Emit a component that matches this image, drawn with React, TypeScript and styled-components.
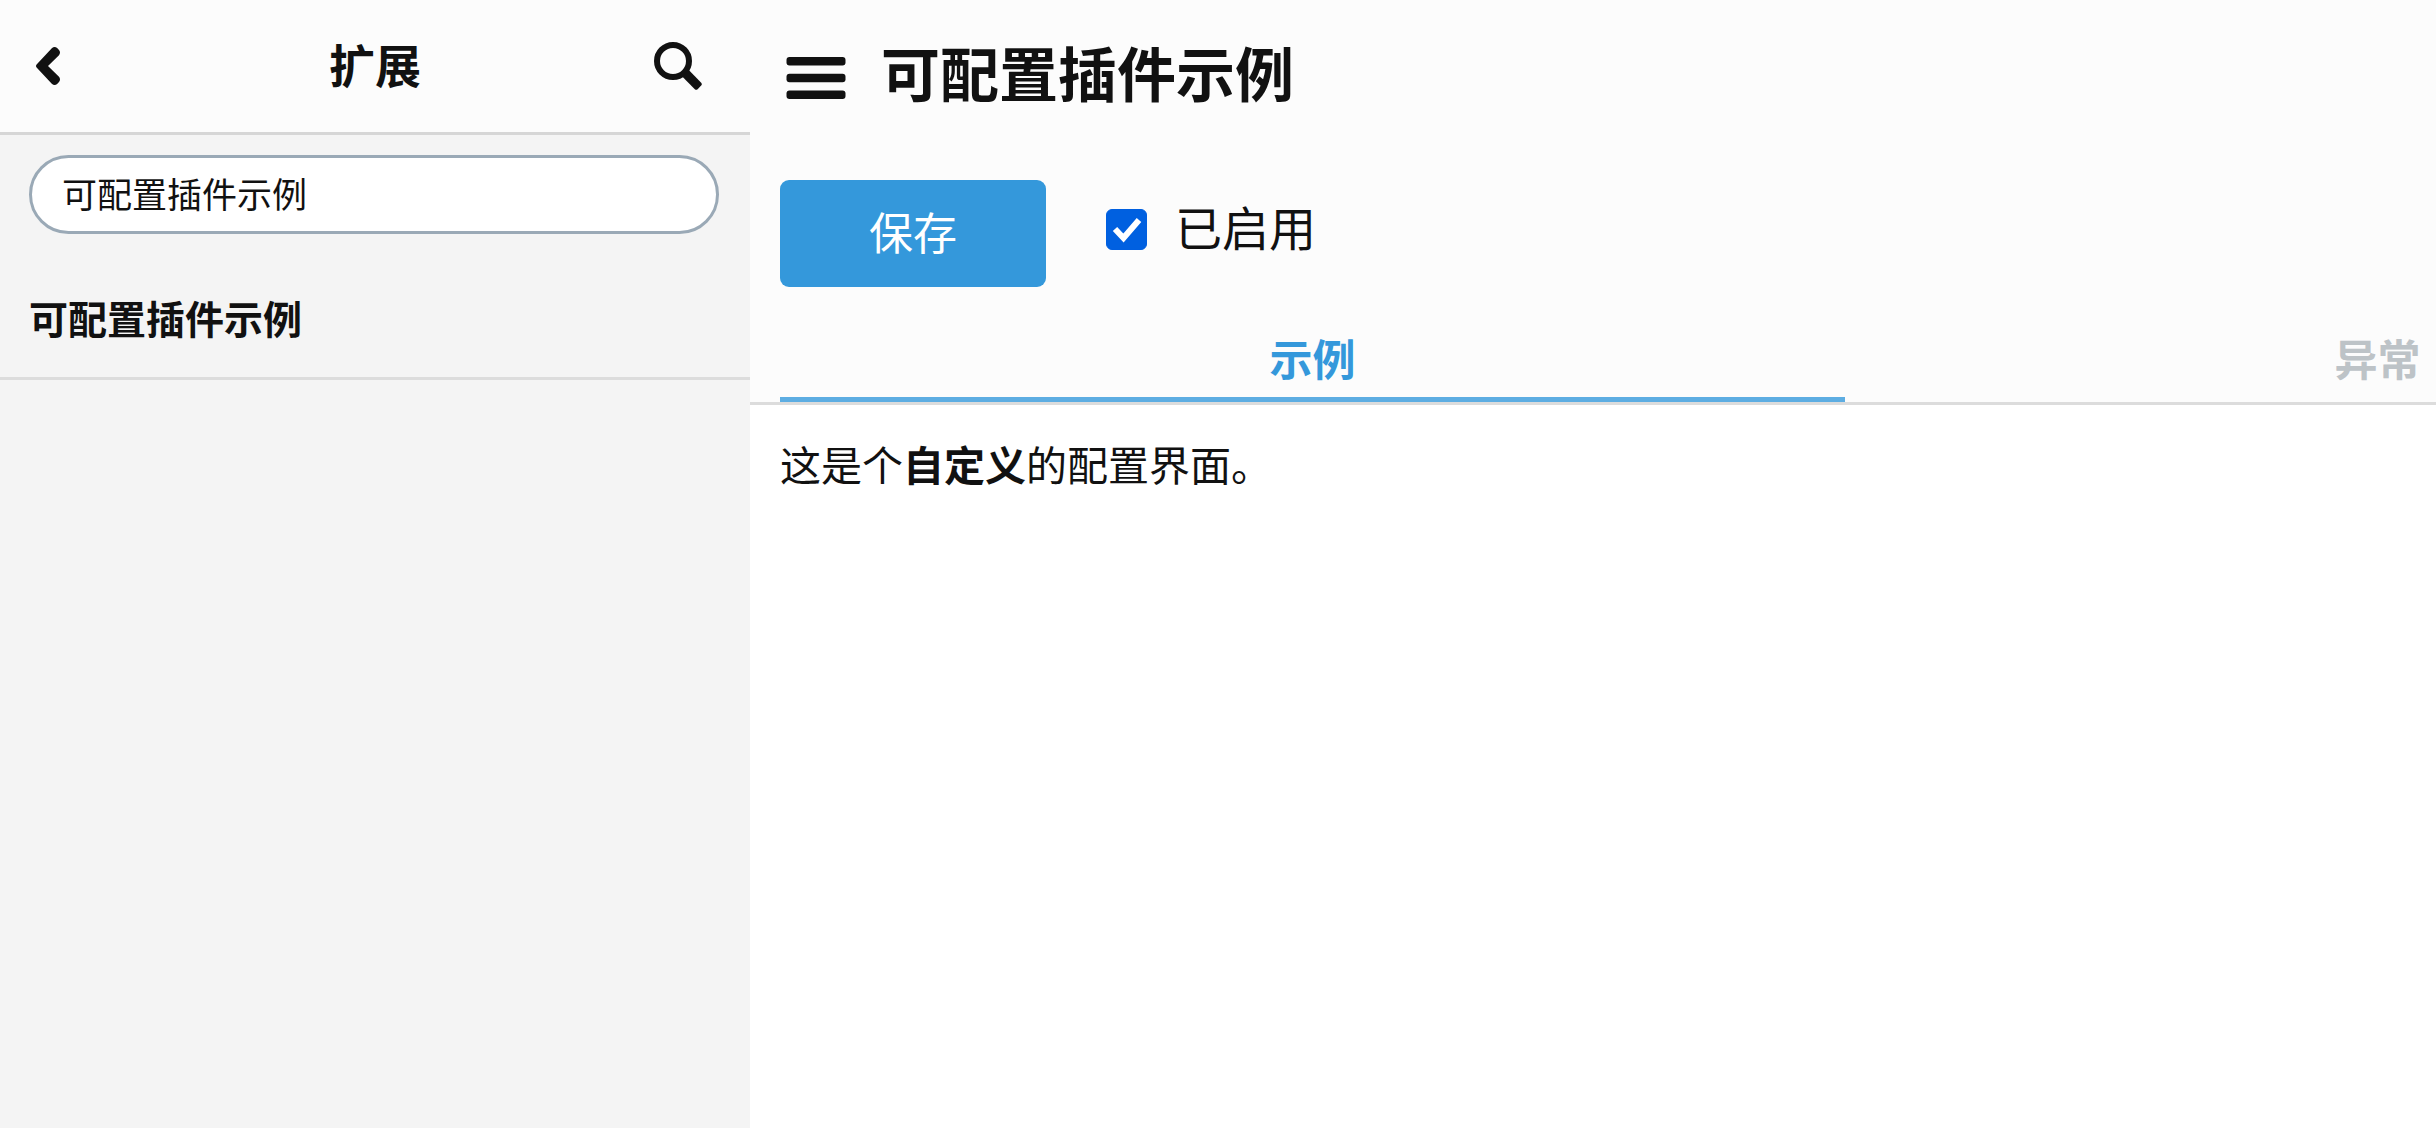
import React, { useState } from "react";
import styled, { createGlobalStyle } from "styled-components";

const GlobalStyle = createGlobalStyle`
  *, *::before, *::after { box-sizing: border-box; }
  body {
    margin: 0;
    background: #fff;
    color: #111;
    font-family: "Noto Sans CJK SC", sans-serif;
  }
  button, input { font: inherit; color: inherit; }
`;

const Page = styled.div`
  display: flex;
  min-height: 100vh;
`;

const Sidebar = styled.aside`
  flex: 0 0 750px;
  background: #f4f4f4;
`;

const SidebarHeader = styled.header`
  display: grid;
  grid-template-columns: 1fr auto 1fr;
  align-items: center;
  height: 135px;
  padding: 0 32px;
  background: #fcfcfc;
  border-bottom: 3px solid #d6d6d6;

  > :last-child { justify-self: end; }
`;

const SidebarTitle = styled.h2`
  margin: 0;
  padding-bottom: 6px;
  font-size: 46px;
  line-height: 66px;
  font-weight: 700;
`;

const IconButton = styled.button<{ $width: number }>`
  display: flex;
  align-items: center;
  justify-content: center;
  width: ${(p) => p.$width}px;
  height: 64px;
  padding: 0;
  border: 0;
  background: none;
  cursor: pointer;

  svg { display: block; fill: #111; }
`;

const SearchForm = styled.form`
  padding: 20px 31px 20px 29px;
`;

const SearchInput = styled.input`
  display: block;
  width: 100%;
  height: 79px;
  padding: 0 30px 4px;
  border: 3px solid #9aa9b6;
  border-radius: 40px;
  background: #fff;
  font-size: 35px;
  outline: none;
`;

const List = styled.ul`
  margin: 0;
  padding: 0;
  list-style: none;
`;

const ListLink = styled.a`
  display: block;
  padding: 36px 29px 33px;
  border-bottom: 3px solid #dcdcdc;
  color: inherit;
  text-decoration: none;
  font-size: 39px;
  line-height: 54px;
  font-weight: 700;
`;

const Main = styled.main`
  flex: 1;
  min-width: 0;
`;

const Top = styled.header`
  background: #fcfcfc;
  border-bottom: 3px solid #dcdcdc;
`;

const TitleRow = styled.div`
  display: flex;
  align-items: center;
  gap: 29px;
  padding: 32px 30px 0;
`;

const Title = styled.h1`
  margin: 0;
  padding-bottom: 12px;
  font-size: 59px;
  line-height: 80px;
  font-weight: 700;
`;

const Actions = styled.div`
  display: flex;
  align-items: center;
  gap: 60px;
  padding: 56px 30px 21px;
`;

const SaveButton = styled.button`
  width: 266px;
  height: 107px;
  padding: 0 0 6px;
  border: 0;
  border-radius: 9px;
  background: #3498db;
  color: #fff;
  font-size: 44px;
  cursor: pointer;
`;

const EnabledLabel = styled.label`
  display: flex;
  align-items: center;
  gap: 28px;
  padding-bottom: 8px;
  font-size: 47px;
  line-height: 64px;
`;

const LabelText = styled.span`
  padding-bottom: 8px;
`;

const Checkbox = styled.input`
  appearance: none;
  width: 41px;
  height: 41px;
  margin: 0;
  border: 1px solid #005fe0;
  border-radius: 6px;
  background: #fff;

  &:checked { background: #0060e0; }
`;

const CheckField = styled.span`
  position: relative;
  display: flex;
`;

const CheckMark = styled.svg`
  position: absolute;
  inset: 0;
  pointer-events: none;
`;

const Tabs = styled.nav`
  display: flex;
  overflow: hidden;
  padding: 0 30px;
`;

const Tab = styled.button<{ $active: boolean }>`
  flex: 0 0 65.5%;
  height: 94px;
  padding: 8px 0 0;
  border: 0;
  border-bottom: 5px solid ${(p) => (p.$active ? "#5dade2" : "transparent")};
  background: none;
  color: ${(p) => (p.$active ? "#3498db" : "#bdc3c7")};
  font-size: 43px;
  line-height: 60px;
  font-weight: 700;
  cursor: pointer;
`;

const Body = styled.p`
  margin: 0;
  padding: 28px 30px;
  font-size: 41px;
  line-height: 60px;
`;

const tabs = ["示例", "异常"];

export default function App() {
  const [query, setQuery] = useState("可配置插件示例");
  const [enabled, setEnabled] = useState(true);
  const [active, setActive] = useState(0);

  return (
    <Page lang="zh-CN">
      <GlobalStyle />
      <Sidebar>
        <SidebarHeader>
          <IconButton type="button" aria-label="返回" $width={32}>
            <svg width="24" height="38" viewBox="0 0 24 38">
              <path d="M0.600 17.400 15.800 1.200q2.800-2.400 5.600 0l1.600 1.800q2 2.600 0 5.200L12 19l11 10.800q2 2.600 0 5.200l-1.600 1.800q-2.800 2.400-5.600 0L0.600 20.600q-1.200-1.600 0-3.200z" />
            </svg>
          </IconButton>
          <SidebarTitle>扩展</SidebarTitle>
          <IconButton type="button" aria-label="搜索" $width={80}>
            <svg width="48" height="48" viewBox="0 0 48 48">
              <circle cx="19" cy="19" r="16" fill="none" stroke="#111" strokeWidth="6" />
              <path d="M34.800 28 47.200 40.800q1.200 1.400 0 2.800l-3.600 3.600q-1.400 1.200-2.800 0L28.200 34.600z" />
            </svg>
          </IconButton>
        </SidebarHeader>
        <SearchForm role="search" onSubmit={(e) => e.preventDefault()}>
          <SearchInput
            type="text"
            aria-label="搜索扩展"
            value={query}
            onChange={(e) => setQuery(e.target.value)}
          />
        </SearchForm>
        <List>
          <li>
            <ListLink href="#plugin">可配置插件示例</ListLink>
          </li>
        </List>
      </Sidebar>
      <Main>
        <Top>
          <TitleRow>
            <IconButton type="button" aria-label="菜单" $width={72}>
              <svg width="60" height="42" viewBox="0 0 60 42">
                <rect x="0.500" y="0" width="59" height="8.600" rx="3" />
                <rect x="0.500" y="16.700" width="59" height="8.600" rx="3" />
                <rect x="0.500" y="33.400" width="59" height="8.600" rx="3" />
              </svg>
            </IconButton>
            <Title>可配置插件示例</Title>
          </TitleRow>
          <Actions>
            <SaveButton type="button">保存</SaveButton>
            <EnabledLabel>
              <CheckField>
                <Checkbox
                  type="checkbox"
                  checked={enabled}
                  onChange={(e) => setEnabled(e.target.checked)}
                />
                {enabled && (
                  <CheckMark width="41" height="41" viewBox="0 0 41 41">
                    <path d="M9 20 17.500 29 33 11" fill="none" stroke="#fff" strokeWidth="6" />
                  </CheckMark>
                )}
              </CheckField>
              <LabelText>已启用</LabelText>
            </EnabledLabel>
          </Actions>
          <Tabs>
            {tabs.map((name, i) => (
              <Tab key={name} type="button" $active={i === active} onClick={() => setActive(i)}>
                {name}
              </Tab>
            ))}
          </Tabs>
        </Top>
        <Body>
          这是个<b>自定义</b>的配置界面。
        </Body>
      </Main>
    </Page>
  );
}
